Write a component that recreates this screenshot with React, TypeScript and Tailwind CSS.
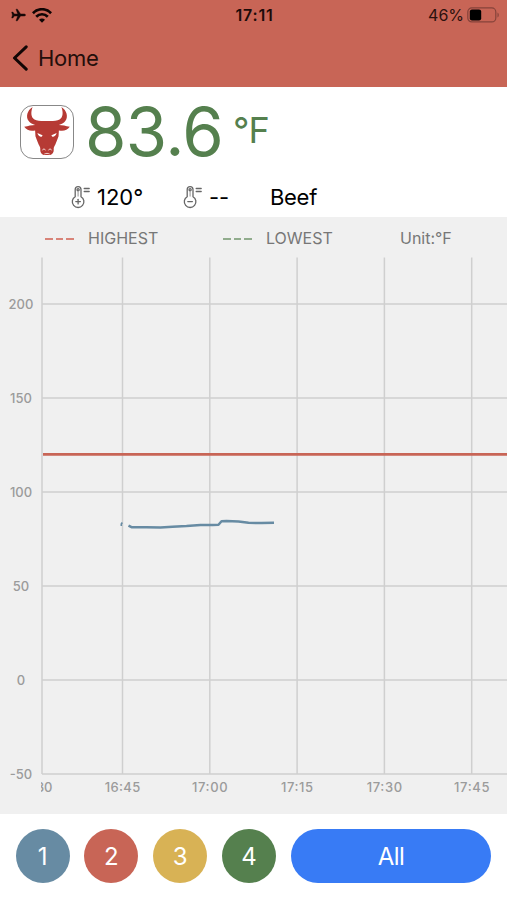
import type { ReactNode } from "react";

const PLOT_LEFT = 42;
const PLOT_TOP = 0.5;
const PLOT_BOTTOM = 517;
const CHART_WIDTH = 507;

const yTicks = [200, 150, 100, 50, 0, -50];
const xTicks = ["16:45", "17:00", "17:15", "17:30", "17:45"];

const probes = [
  { id: 1, color: "bg-[#678ba3]" },
  { id: 2, color: "bg-[#c86556]" },
  { id: 3, color: "bg-[#d8b255]" },
  { id: 4, color: "bg-[#55804e]" },
];

const yFor = (value: number) => 423 - value * 1.88;
const xFor = (index: number) => 122.5 + index * 87.3;

function PlaneIcon() {
  return (
    <svg className="w-[15px] h-[14px]" viewBox="0 0 15 14" fill="#160807" stroke="#160807" strokeWidth=".4">
      <path d="M14.6 7c0 .7-.8 1.1-1.8 1.1H9.6L6.4 12.8H5L6.7 8.1H3.4L1.9 10H.7L1.4 7 .7 4h1.2l1.5 1.9h3.3L5 1.2h1.4l3.2 4.7h3.2c1 0 1.8.4 1.8 1.1Z" />
    </svg>
  );
}

function WifiIcon() {
  return (
    <svg className="w-[20px] h-[15px]" viewBox="0 0 20 15" fill="none" stroke="#100504" strokeWidth="2.7">
      <path d="M.9 5.2C6-.1 14-.1 19.1 5.2" />
      <path d="M4.2 8.8c3.3-3.4 8.3-3.4 11.6 0" />
      <path d="M10 14.7 7 11.7c1.6-1.6 4.4-1.6 6 0Z" fill="#100504" stroke="none" />
    </svg>
  );
}

function BatteryIcon() {
  return (
    <svg className="w-[33px] h-[16px]" viewBox="0 0 33 16" fill="none">
      <rect x=".8" y=".9" width="28" height="14" rx="4" stroke="#85433a" strokeWidth="1.2" />
      <rect x="2.8" y="2.4" width="11.4" height="11" rx="2.2" fill="#000" />
      <path d="M30.5 5.5c1.7.7 1.7 4.3 0 5Z" fill="#85433a" />
    </svg>
  );
}

function BullIcon() {
  return (
    <svg className="w-full h-full" viewBox="0 0 162 162">
      {/* Horns, ears and head */}
      <path
        fill="#b63a34"
        d="M36 3C19 14 14 34 24 47c5 7 12 10 20 12-11 1-21 2-34 6 8 11 20 14 34 11l1 18c3 9 7 17 10 26 3 6 6 9 5 15-1 9 4 16 11 18h20c7-2 12-9 11-18-1-6 2-9 5-15 3-9 7-17 10-26l1-18c14 3 26 0 34-11-13-4-23-5-34-6 8-2 15-5 20-12 10-13 5-33-12-44 6 17 5 32-6 39-9 6-26 5-39 5s-30 1-39-5C31 35 30 20 36 3Z"
      />
      <path fill="#fff" d="m51 84 16 7c0 7-12 7-16-7ZM111 84l-16 7c0 7 12 7 16-7Z" />
      <path d="M67 137c1-5 8-4 9 0M95 137c-1-5-8-4-9 0M74 149c5-2 9-2 14 0" fill="none" stroke="#f5d6d3" strokeWidth="3" strokeLinecap="round" />
    </svg>
  );
}

function ThermometerIcon({ plus }: { plus?: boolean }) {
  return (
    <svg className="w-[20px] h-[24px]" viewBox="0 0 20 24" fill="none" stroke="#666" strokeWidth="1.3" strokeLinecap="round">
      <path d="M4.2 11.7V4.6a2.9 2.9 0 0 1 5.8 0v7.1a5.8 5.8 0 1 1-5.8 0Z" />
      <circle cx="7.1" cy="4.8" r="1.1" />
      <path d="M7.1 6.3v4.8" stroke="#aaa" />
      <path d="M4.8 16.6h4.6" />
      {plus && <path d="M7.1 14.3v4.6" />}
      <path d="M13.2 3.5h5M13.2 6.5h5" />
    </svg>
  );
}

function LegendDash({ color }: { color: string }) {
  return (
    <div className="flex gap-[3px] w-[29px] mt-[2px]">
      <span className={`w-[7.5px] h-[2px] ${color}`} />
      <span className={`w-[7.5px] h-[2px] ${color}`} />
      <span className={`w-[7.5px] h-[2px] ${color}`} />
    </div>
  );
}

function ProbeButton({ color, children }: { color: string; children: ReactNode }) {
  return (
    <button className={`w-[54px] h-[54px] rounded-full text-white text-[24px] leading-none pt-px ${color}`}>
      {children}
    </button>
  );
}

function TemperatureChart() {
  return (
    <svg className="block w-[507px] h-[557px]" viewBox="0 0 507 557">
      <defs>
        <clipPath id="time-axis">
          <rect x="41" y="517" width="466" height="40" />
        </clipPath>
      </defs>

      {/* Grid */}
      <g stroke="#cfcfcf" strokeWidth="1.5">
        <path d={`M${PLOT_LEFT} ${PLOT_TOP}V${PLOT_BOTTOM}`} />
        {xTicks.map((label, i) => (
          <path key={label} d={`M${xFor(i)} ${PLOT_TOP}V${PLOT_BOTTOM}`} />
        ))}
        {yTicks.map((value) => (
          <path key={value} d={`M${PLOT_LEFT} ${yFor(value)}H${CHART_WIDTH}`} />
        ))}
      </g>

      {/* Axis labels */}
      <g fill="#9b9b9b" fontSize="13" fontWeight="500" textAnchor="middle">
        {yTicks.map((value) => (
          <text key={value} x="21" y={yFor(value) + 4.7}>
            {value}
          </text>
        ))}
        {/* First label runs off the left edge of the plot */}
        <text x="52.5" y="535" textAnchor="end" clipPath="url(#time-axis)">
          30
        </text>
        {xTicks.map((label, i) => (
          <text key={label} x={xFor(i)} y="535" textLength={i === 2 ? 32 : 35.5}>
            {label}
          </text>
        ))}
      </g>

      {/* Highest threshold */}
      <path d={`M43 ${yFor(120)}H${CHART_WIDTH}`} stroke="#c86556" strokeWidth="2.6" />

      {/* Readings */}
      <g fill="none" stroke="#678ba3" strokeWidth="2.5" strokeLinejoin="round">
        <path d="M121.3 269v-2l1-1.5" strokeWidth="1.6" />
        <path d="M128.5 268.7l3 1.5 15 .1 14 .1 12-.7 14-.6 14-1 12-.2 6-.2 3-3.5 5-.2 12 .4 10 1.4 13 .3 12.5-.3" />
      </g>
    </svg>
  );
}

export default function App() {
  return (
    <div className="flex flex-col w-[507px] h-[900px] overflow-hidden bg-white text-black font-['Inter','Liberation_Sans',sans-serif]">
      {/* Header */}
      <header className="h-[87px] shrink-0 bg-[#c86556]">
        <div className="flex items-center h-[30px] pl-[11px] pr-[7px]">
          <div className="flex items-center gap-[6px] flex-1">
            <PlaneIcon />
            <WifiIcon />
          </div>
          <span className="text-[16px] font-semibold leading-none tracking-[0.8px] text-[#1c0b09] mr-[2px]">17:11</span>
          <div className="flex flex-1 items-center justify-end gap-[3px]">
            <span className="text-[16px] leading-none text-[#2b110e]">46%</span>
            <BatteryIcon />
          </div>
        </div>
        <button className="flex items-center h-[56px] pl-[12px] gap-[9px]">
          <svg className="w-[17px] h-[26px]" viewBox="0 0 17 26" fill="none" stroke="#120605" strokeWidth="3" strokeLinecap="round" strokeLinejoin="round">
            <path d="M14.2 1.8 2.5 13l11.7 11.2" />
          </svg>
          <span className="text-[22px] leading-none tracking-[-0.3px] text-[#240e0b]">Home</span>
        </button>
      </header>

      {/* Current reading */}
      <section className="h-[130px] shrink-0">
        <div className="flex h-[90px] pl-[20px]">
          <div className="w-[54px] h-[54px] mt-[18px] rounded-[13px] border border-[#888] overflow-hidden">
            <BullIcon />
          </div>
          <span className="ml-[11px] mt-[11px] w-[146px] text-[67px] leading-[67px] tracking-[-0.6px] text-[#55804e]">83.6</span>
          <span className="mt-[25px] ml-[2px] text-[36px] leading-[36px] tracking-[-0.8px] text-[#55804e]">°F</span>
        </div>
        <div className="flex items-center h-[40px] text-[22px] leading-none">
          <div className="flex items-center gap-[6px] w-[112px] ml-[71px]">
            <ThermometerIcon plus />
            <span>120°</span>
          </div>
          <div className="flex items-center gap-[6px] w-[87px]">
            <ThermometerIcon />
            <span>--</span>
          </div>
          <span className="tracking-[-0.3px]">Beef</span>
        </div>
      </section>

      {/* Chart */}
      <section className="h-[597px] shrink-0 bg-[#f0f0f0]">
        <div className="flex items-center h-[40px] pl-[45px] pt-px text-[16px] leading-none text-[#777]">
          <LegendDash color="bg-[#d88378]" />
          <span className="ml-[14px] w-[135px]">HIGHEST</span>
          <LegendDash color="bg-[#91ac8d]" />
          <span className="ml-[14px] w-[134px]">LOWEST</span>
          <span>Unit:°F</span>
        </div>
        <TemperatureChart />
      </section>

      {/* Probe selector */}
      <footer className="flex flex-1 items-center gap-[14.8px] px-[15.6px] pb-[2px]">
        {probes.map((probe) => (
          <ProbeButton key={probe.id} color={probe.color}>
            {probe.id}
          </ProbeButton>
        ))}
        <button className="flex-1 h-[54px] rounded-full bg-[#387bf5] text-white text-[24px] leading-none tracking-[-0.5px] pt-px">
          All
        </button>
      </footer>
    </div>
  );
}
